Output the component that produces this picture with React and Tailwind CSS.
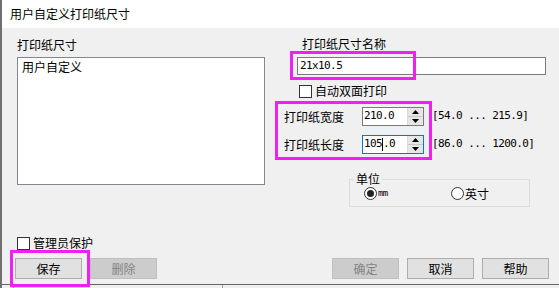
import React from "react";

const F = { fontFamily: '"Noto Sans CJK SC", "Noto Sans", sans-serif' };
const MONO = { fontFamily: '"DejaVu Sans Mono", "Liberation Mono", monospace', letterSpacing: "-0.6px" };

function Spin({ value, focused, caret }) {
  return (
    <div
      className={`flex h-[19px] w-[62px] bg-white border ${
        focused ? "border-[#0078d7]" : "border-[#7a7a7a]"
      }`}
    >
      <div className="flex-1 flex items-center pl-[1px] text-[11px] text-black" style={MONO}>
        {caret ? (
          <>
            <span>105</span>
            <span className="w-px h-[13px] bg-black" />
            <span>.0</span>
          </>
        ) : (
          value
        )}
      </div>
      <div className="w-[16px] flex flex-col border-l border-[#dadada] bg-[#e6e6e6]">
        <div className="flex-1 flex items-center justify-center border-b border-[#c8c8c8]">
          <svg width="7" height="4" viewBox="0 0 7 4"><path d="M3.5 0 L7 4 L0 4 Z" fill="#000" /></svg>
        </div>
        <div className="flex-1 flex items-center justify-center">
          <svg width="7" height="4" viewBox="0 0 7 4"><path d="M0 0 L7 0 L3.5 4 Z" fill="#000" /></svg>
        </div>
      </div>
    </div>
  );
}

function Btn({ children, disabled }) {
  return (
    <div
      className={`w-[67px] h-[21px] flex items-center justify-center border text-[12px] ${
        disabled
          ? "bg-[#cccccc] border-[#bfbfbf] text-[#838383]"
          : "bg-[#e1e1e1] border-[#adadad] text-black"
      }`}
    >
      {children}
    </div>
  );
}

function Check({ label }) {
  return (
    <div className="flex items-center gap-[3px] h-[14px]">
      <div className="w-[13px] h-[13px] border border-[#333] bg-white" />
      <span className="text-[12px] leading-[14px] text-black">{label}</span>
    </div>
  );
}

export default function App() {
  return (
    <div
      className="relative w-[559px] h-[288px] bg-[#f0f0f0] border-l-2 border-[#707070] flex flex-col overflow-hidden"
      style={F}
    >
      <div className="h-[28px] bg-white flex items-center pl-[8px] text-[12px] text-black shrink-0">
        用户自定义打印纸尺寸
      </div>

      <div className="flex h-[257px] shrink-0 flex-col border-b border-[#646464]">
        <div className="flex h-[180px]">
          <div className="ml-[15px] w-[248px] flex flex-col pt-[9px]">
            <div className="h-[16px] leading-[16px] text-[12px] text-black">打印纸尺寸</div>
            <div className="mt-[4px] h-[128px] bg-white border border-[#828790] pl-[4px] pt-[2px] text-[12px] leading-[14px] text-black">
              用户自定义
            </div>
          </div>

          <div className="ml-[19px] w-[262px] flex flex-col pt-[8px]">
            <div className="ml-[18px] h-[16px] leading-[16px] text-[12px] text-black">打印纸尺寸名称</div>
            <div
              className="mt-[5px] ml-[13px] w-[249px] h-[18px] bg-white border border-[#7a7a7a] flex items-center pl-[2px] text-[11px] text-black"
              style={MONO}
            >
              21x10.5
            </div>
            <div className="mt-[9px] ml-[15px]">
              <Check label="自动双面打印" />
            </div>
            <div className="mt-[9px] flex items-center h-[19px]">
              <div className="w-[78px] text-[12px] text-black">打印纸宽度</div>
              <Spin value="210.0" />
              <div className="ml-[8px] text-[11px] text-black whitespace-pre" style={MONO}>
                [54.0 ... 215.9]
              </div>
            </div>
            <div className="mt-[9px] flex items-center h-[19px]">
              <div className="w-[78px] text-[12px] text-black">打印纸长度</div>
              <Spin focused caret />
              <div className="ml-[8px] text-[11px] text-black whitespace-pre" style={MONO}>
                [86.0 ... 1200.0]
              </div>
            </div>
            <div className="relative mt-[25px] ml-[65px] w-[181px] h-[28px] border border-[#dcdcdc]">
              <div className="absolute -top-[9px] left-[4px] px-[2px] bg-[#f0f0f0] text-[12px] leading-[16px] text-black">
                单位
              </div>
              <div className="flex items-center h-full pt-[1px] pl-[14px]">
                <div className="flex items-center gap-[1px] w-[87px]">
                  <div className="w-[13px] h-[13px] rounded-full border border-[#333] bg-white flex items-center justify-center">
                    <div className="w-[7px] h-[7px] rounded-full bg-[#222]" />
                  </div>
                  <span className="text-[9px] text-black" style={MONO}>mm</span>
                </div>
                <div className="flex items-center gap-[1px]">
                  <div className="w-[13px] h-[13px] rounded-full border border-[#333] bg-white" />
                  <span className="text-[12px] text-black">英寸</span>
                </div>
              </div>
            </div>
          </div>
        </div>

        <div className="ml-[15px] mt-[28px]">
          <Check label="管理员保护" />
        </div>
        <div className="mt-[8px] flex justify-between pl-[13px] pr-[10px]">
          <div className="flex gap-[8px]">
            <Btn>保存</Btn>
            <Btn disabled>删除</Btn>
          </div>
          <div className="flex gap-[8px]">
            <Btn disabled>确定</Btn>
            <Btn>取消</Btn>
            <Btn>帮助</Btn>
          </div>
        </div>
      </div>
      <div className="flex-1 flex">
        <div className="ml-[11px] w-px bg-[#a0a0a0]" />
        <div className="ml-[208px] w-px bg-[#a0a0a0]" />
      </div>

      {/* annotation highlights */}
      <div className="absolute left-[288px] top-[51px] w-[126px] h-[29px] border-[3px] border-[#f020f0]" />
      <div className="absolute left-[273px] top-[101px] w-[157px] h-[59px] border-[3px] border-[#f020f0]" />
      <div className="absolute left-[8px] top-[250px] w-[80px] h-[37px] border-[3px] border-[#f020f0]" />
    </div>
  );
}
